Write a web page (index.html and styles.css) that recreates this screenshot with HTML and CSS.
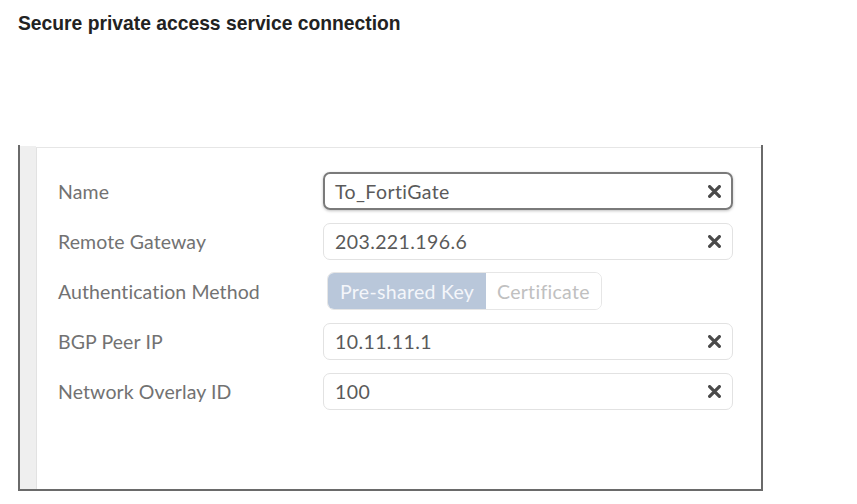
FILE: index.html
```html
<!DOCTYPE html>
<html>
<head>
<meta charset="utf-8">
<link rel="stylesheet" href="styles.css">
</head>
<body>
<h1 class="title">Secure private access service connection</h1>
<div class="frame">
  <div class="strip"></div>
  <div class="panel">
    <div class="form">
      <div class="label">Name</div>
      <div class="field focused"><span class="value">To_FortiGate</span><svg class="clear" viewBox="0 0 12 12"><path d="M1.5 1.5L10.5 10.5M10.5 1.5L1.5 10.5"/></svg></div>

      <div class="label">Remote Gateway</div>
      <div class="field"><span class="value">203.221.196.6</span><svg class="clear" viewBox="0 0 12 12"><path d="M1.5 1.5L10.5 10.5M10.5 1.5L1.5 10.5"/></svg></div>

      <div class="label">Authentication Method</div>
      <div class="toggle-row">
        <div class="toggle">
          <span class="opt active">Pre-shared Key</span>
          <span class="opt">Certificate</span>
        </div>
      </div>

      <div class="label">BGP Peer IP</div>
      <div class="field"><span class="value">10.11.11.1</span><svg class="clear" viewBox="0 0 12 12"><path d="M1.5 1.5L10.5 10.5M10.5 1.5L1.5 10.5"/></svg></div>

      <div class="label">Network Overlay ID</div>
      <div class="field"><span class="value">100</span><svg class="clear" viewBox="0 0 12 12"><path d="M1.5 1.5L10.5 10.5M10.5 1.5L1.5 10.5"/></svg></div>
    </div>
  </div>
</div>
</body>
</html>
```

FILE: styles.css
```css
html, body {
  margin: 0;
  padding: 0;
  background: #ffffff;
}

body {
  width: 857px;
  height: 504px;
  overflow: hidden;
}

.title {
  margin: 0;
  padding: 12px 0 0 18px;
  height: 132px;
  box-sizing: border-box;
  font-family: "Liberation Sans", Arial, sans-serif;
  font-weight: bold;
  font-size: 19.3px;
  color: #222;
  line-height: 24px;
}

.frame {
  margin-left: 18px;
  margin-top: 13px;
  width: 745px;
  height: 346px;
  box-sizing: border-box;
  border-left: 2px solid #6a6a6a;
  border-right: 2px solid #6a6a6a;
  border-bottom: 2px solid #6a6a6a;
  display: flex;
}

.strip {
  width: 16px;
  margin-top: 1px;
  background: #efefef;
  flex: none;
}

.panel {
  flex: 1;
  margin-top: 2px;
  border-top: 1px solid #e6e6e6;
  border-left: 1px solid #e2e2e2;
  background: #fff;
  padding: 24px 0 0 21px;
}

.form {
  display: grid;
  grid-template-columns: 265px 410px;
  grid-auto-rows: 38px;
  row-gap: 12px;
  align-items: center;
  font-family: Lato, "Open Sans", sans-serif;
}

.label {
  font-size: 19.5px;
  color: #727272;
  letter-spacing: 0.1px;
}

.field {
  height: 37px;
  box-sizing: border-box;
  border: 1px solid #e2e2e2;
  border-radius: 7px;
  display: flex;
  align-items: center;
  padding: 0 11px 0 11px;
}

.field.focused {
  height: 38px;
  border: 2px solid #7a7a7a;
  padding-left: 10px;
  padding-right: 10px;
  box-shadow: 0 1px 3px rgba(0,0,0,0.25);
}

.value {
  flex: 1;
  font-size: 19.5px;
  color: #5a5a5a;
  letter-spacing: 0.4px;
}

.clear {
  width: 13px;
  height: 13px;
  flex: none;
  margin-right: 0;
}

.clear path {
  stroke: #4a4a4a;
  stroke-width: 3;
  stroke-linecap: round;
  fill: none;
}

.toggle-row {
  height: 40px;
  display: flex;
  align-items: center;
  padding-left: 4px;
}

.toggle {
  display: flex;
  height: 38px;
  border: 1px solid #e6e6e6;
  border-radius: 7px;
  overflow: hidden;
  box-sizing: border-box;
}

.opt {
  display: flex;
  align-items: center;
  padding: 0 11px;
  font-size: 19.5px;
  color: #c0c0c0;
  background: #fff;
  letter-spacing: 0.3px;
}

.opt.active {
  background: #b9c7da;
  color: #f4f6fa;
  width: 158px;
  padding: 0 0 0 12px;
  box-sizing: border-box;
}
```
